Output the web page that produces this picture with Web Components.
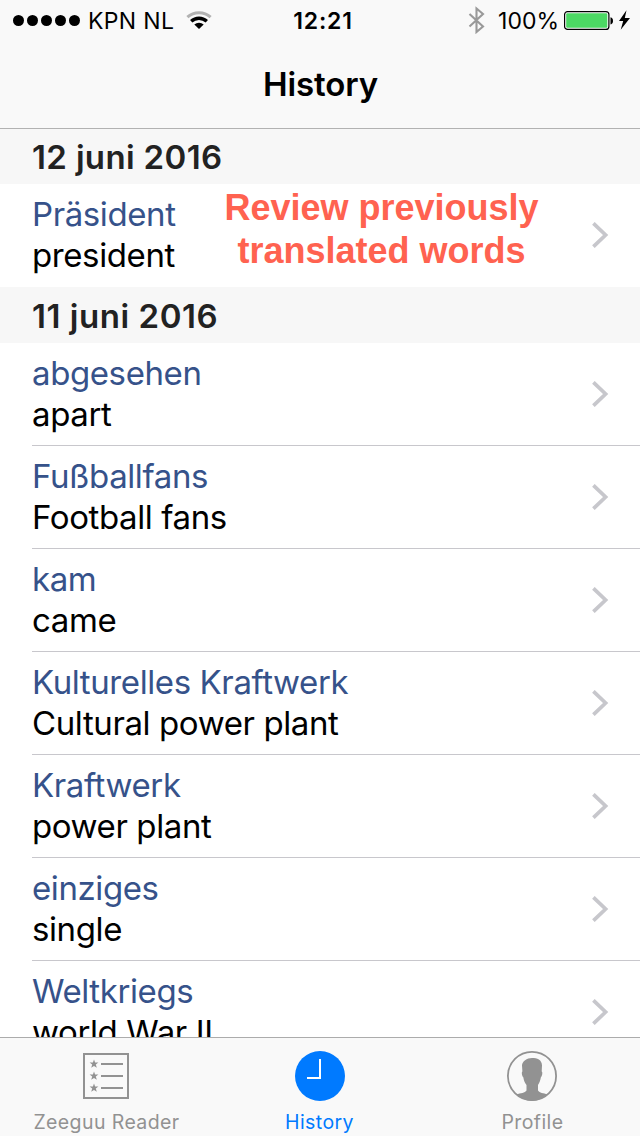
<!DOCTYPE html>
<html lang="nl">
<head>
<meta charset="utf-8">
<title>History</title>
<style>
html,body{margin:0;padding:0}
body{width:640px;height:1136px;overflow:hidden;background:#fff;font-family:Inter,"Liberation Sans",sans-serif;color:#000}
</style>
</head>
<body>
<history-app></history-app>
<script>
const define = (name, html) => customElements.define(name, class extends HTMLElement {
  constructor() {
    super();
    const t = document.createElement('template');
    t.innerHTML = html;
    this.attachShadow({ mode: 'open' }).append(t.content.cloneNode(true));
  }
});

define('status-bar', `
<style>
:host{display:grid;grid-template-columns:1fr auto 1fr;grid-template-rows:40px;height:40px;align-items:center;font-size:23px;line-height:38px}
.left,.right{display:flex;align-items:center;height:40px}
.left{padding-left:13px}
.right{justify-content:flex-end;padding-right:9px}
svg{display:block;flex:none}
span{padding-top:2px}
.carrier{margin-left:8px;letter-spacing:.35px;width:98px;white-space:nowrap}
.time{font-weight:600;letter-spacing:.85px;padding-left:6px}
.pct{margin-left:12px;margin-right:5px}
</style>
<div class="left">
<svg width="67" height="12" viewBox="0 0 67 12"><circle cx="5.5" cy="6.5" r="5.5"/><circle cx="19.5" cy="6.5" r="5.5"/><circle cx="33.5" cy="6.5" r="5.5"/><circle cx="47.5" cy="6.5" r="5.5"/><circle cx="61.5" cy="6.5" r="5.5"/></svg>
<span class="carrier">KPN NL</span>
<svg width="26" height="20" viewBox="0 0 26 20" fill="none"><path d="M1.4 7.2A17 17 0 0 1 24.6 7.2" stroke="#b2b2b2" stroke-width="3"/><path d="M5.2 11.3A11.4 11.4 0 0 1 20.8 11.3" stroke="#000" stroke-width="3.400"/><path d="M8.3 14.500A7 7 0 0 1 17.7 14.500L13 19Z" fill="#000"/></svg>
</div>
<span class="time">12:21</span>
<div class="right">
<svg width="18" height="28" viewBox="0 0 18 28" fill="none" stroke="#999" stroke-width="2.1"><path d="M1.5 8L15 20.500L8.5 26V2.500L15 8L1.5 20.500"/></svg>
<span class="pct">100%</span>
<svg width="67" height="20" viewBox="0 0 67 20"><rect x=".6" y="1.600" width="44.300" height="17.800" rx="3" fill="#fff" stroke="#000" stroke-width="1.200"/><rect x="2.200" y="3.200" width="41.100" height="14.600" rx="1.200" fill="#4cd964"/><path d="M46.500 7.200q2.500 .5 2.500 3.600t-2.500 3.600z"/><path d="M62.500 .3L55 10.900H59.200L56.700 19.800L66 8.100H60.800Z"/></svg>
</div>`);

define('nav-bar', `
<style>
:host{display:block;height:88px;line-height:88px;text-align:center;font-size:33px;font-weight:600;letter-spacing:-.1px;border-bottom:1px solid #b2b2b2;padding-left:1px}
</style><slot></slot>`);

define('section-header', `
<style>
:host{display:block;height:56px;line-height:58px;padding-left:32px;background:#f7f7f7;color:#222;font-size:33px;font-weight:600;letter-spacing:.55px;flex:none}
:host([first]){height:55px;line-height:56px;letter-spacing:.35px}
</style><slot></slot>`);

define('word-row', `
<style>
:host{display:flex;box-sizing:border-box;height:103px;align-items:center;flex:none;padding-left:32px;background:#fff}
.body{flex:1;display:flex;align-items:center;box-sizing:border-box;height:103px;border-bottom:1px solid #c8c7cc;padding-right:31px}
:host([last]) .body{border-bottom-color:transparent}
.text{flex:1;font-size:33px;line-height:41px;letter-spacing:-.4px;white-space:nowrap}
.word{color:#36528a}
.word,.tr{display:block}
svg{flex:none;display:block}
</style>
<div class="body"><div class="text"><span class="word"><slot name="word"></slot></span><span class="tr"><slot></slot></span></div>
<svg width="17" height="26" viewBox="0 0 17 26" fill="none" stroke="#c7c7cc" stroke-width="3.700"><path d="M1.400 1.300L13.600 13L1.400 24.700"/></svg></div>`);

define('review-note', `
<style>
:host{position:absolute;left:182px;top:186px;width:399px;text-align:center;font:bold 36px/43px "Liberation Sans",Arial,sans-serif;color:#ff6250}
span{display:block;white-space:nowrap}
</style><span><slot name="a"></slot></span><span><slot name="b"></slot></span>`);

define('tab-item', `
<style>
:host{display:flex;flex-direction:column;align-items:center;color:#929292;font-size:19.500px;letter-spacing:.4px;width:212px;padding-top:12px}
:host([active]){color:#007aff}
span{line-height:24px;margin-top:8px;padding-left:1px;white-space:nowrap}
</style><slot name="icon"></slot><span><slot></slot></span>`);

define('tab-bar', `
<style>
:host{display:flex;box-sizing:border-box;height:99px;border-top:1px solid #acacac;background:#f9f9f9;gap:1px;flex:none}
svg{display:block}
</style>
<tab-item><svg slot="icon" width="52" height="52" viewBox="0 0 52 52"><rect x="4" y="4" width="44" height="44" fill="none" stroke="#929292" stroke-width="2"/><path d="M21 14H43M21 26H43M21 38H43" stroke="#929292" stroke-width="2"/><g fill="#929292"><path id="s" d="M14 9.500l1.100 3.100h3.300l-2.600 2 1 3.200-2.800-1.900-2.800 1.900 1-3.200-2.600-2h3.300z"/><use href="#s" y="12"/><use href="#s" y="24"/></g></svg>Zeeguu Reader</tab-item>
<tab-item active><svg slot="icon" width="52" height="52" viewBox="0 0 52 52"><circle cx="27" cy="26" r="25" fill="#007aff"/><path d="M27 9V28H14" fill="none" stroke="#fff" stroke-width="2"/></svg>History</tab-item>
<tab-item><svg slot="icon" width="52" height="52" viewBox="0 0 52 52"><circle cx="26" cy="26" r="24.100" fill="none" stroke="#929292" stroke-width="1.800"/><path fill="#929292" d="M26 8C31 8 36 9.800 36 15.500L35.700 21.500C36.800 21.500 36.400 26 34.900 27.300C34.300 30.500 33.500 33 32 35V40.500C33.500 43 37.500 43 41.500 44.500Q34.500 51 26 51T10.500 44.500C14.500 43 19 43 20.500 40.500V35C18.700 33 17.800 30.500 17.300 27.300C15.800 26 15.400 21.500 16.400 21.500L16 15.500C16 11.500 21 8 26 8Z"/></svg>Profile</tab-item>`);

define('history-app', `
<style>
:host{display:flex;flex-direction:column;width:640px;height:1136px;position:relative;overflow:hidden}
header{background:#f9f9f9;flex:none}
main{flex:1;min-height:0;overflow:hidden;display:flex;flex-direction:column}
</style>
<header><status-bar></status-bar><nav-bar>History</nav-bar></header>
<main>
<section-header first>12 juni 2016</section-header>
<word-row last><span slot="word">Präsident</span>president</word-row>
<section-header>11 juni 2016</section-header>
<word-row><span slot="word">abgesehen</span>apart</word-row>
<word-row><span slot="word">Fußballfans</span>Football fans</word-row>
<word-row><span slot="word">kam</span>came</word-row>
<word-row><span slot="word">Kulturelles Kraftwerk</span>Cultural power plant</word-row>
<word-row><span slot="word">Kraftwerk</span>power plant</word-row>
<word-row><span slot="word">einziges</span>single</word-row>
<word-row><span slot="word">Weltkriegs</span>world War II</word-row>
</main>
<tab-bar></tab-bar>
<review-note><span slot="a">Review previously</span><span slot="b">translated words</span></review-note>`);
</script>
</body>
</html>
